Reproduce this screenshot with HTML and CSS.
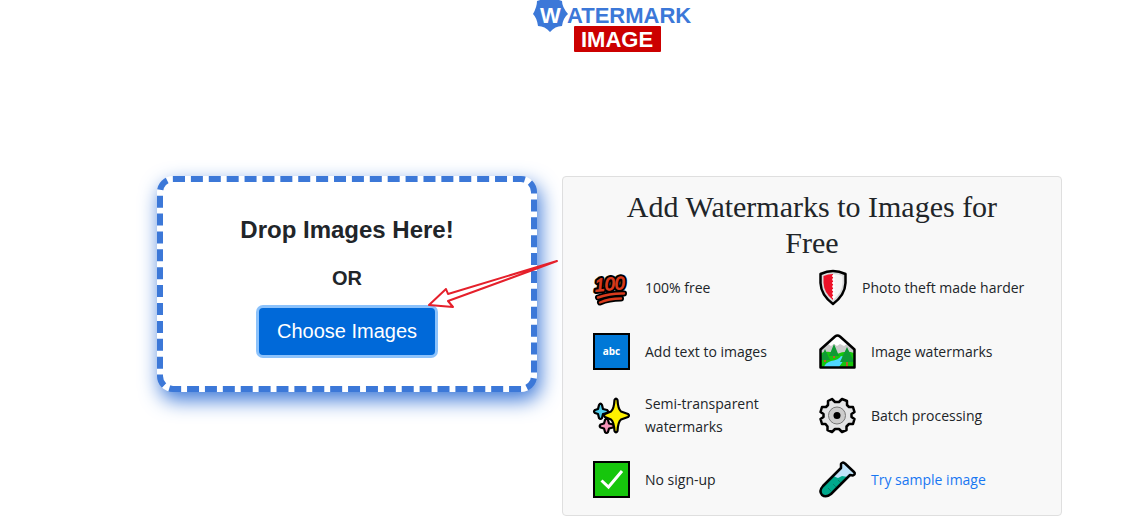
FILE: index.html
```html
<!DOCTYPE html>
<html lang="en">
  <head>
    <meta charset="UTF-8" />
    <meta name="viewport" content="width=device-width, initial-scale=1.0" />
    <title>Watermark Image</title>
    <link rel="stylesheet" href="styles.css">
  </head>
  <body>
    <header class="header">
      <svg class="logo" viewBox="0 0 164 52" role="img" aria-label="Watermark Image">
        <path d="M22 -3L34 1Q34 7 40 14Q35 18 34 26Q27 26 22 32Q17 26 10 26Q9 18 5 14Q9 7 9 1Z" fill="#3c78d8" />
        <text x="12" y="23" fill="#fff">W</text>
        <text x="39" y="23" fill="#3c78d8">ATERMARK</text>
        <rect x="46" y="26" width="87" height="26" rx="1" fill="#c00" />
        <text x="53" y="47" fill="#fff">IMAGE</text>
      </svg>
    </header>

    <main class="container">
      <section class="drop-zone">
        <h2>Drop Images Here!</h2>
        <h3>OR</h3>
        <button type="button" class="choose">Choose Images</button>
        <svg class="arrow" viewBox="0 0 134 52" aria-hidden="true">
          <path d="M131 3L22 36L20 31L3 47L27 49L22 43Q80 22 131 3Z" />
        </svg>
      </section>

      <section class="info">
        <h1>Add Watermarks to Images for Free</h1>
        <ul class="features">
          <li>
            <svg class="icon" viewBox="0 0 37 37">
              <g transform="rotate(-5 18 18)">
                <text class="hundred hundred-edge" x="2" y="21">100</text>
                <text class="hundred" x="2" y="21">100</text>
              </g>
              <path d="M5 28.500Q18 24 31 24.500M7 33.500Q16 29.500 28 29.500" fill="none" stroke="#000" stroke-width="6" stroke-linecap="round" />
              <path d="M5 28.500Q18 24 31 24.500M7 33.500Q16 29.500 28 29.500" fill="none" stroke="#da3b1d" stroke-width="2.400" stroke-linecap="round" />
            </svg>
            <span>100% free</span>
          </li>
          <li>
            <svg class="icon icon-narrow" viewBox="0 0 28 37">
              <path d="M14 2Q20 2 26.500 5V14Q26 26 14 35Q2 26 1.500 14V5Q8 2 14 2Z" fill="#d8d9da" stroke="#000" stroke-width="2.500" stroke-linejoin="round" />
              <path d="M14 5Q9 5 4.500 7V14Q5 24 14 31Z" fill="#ed1128" />
              <path d="M14 5Q19 5 23.500 7V14Q23 24 14 31Z" fill="#f5f5f5" />
              <path d="M14.500 6V30" stroke="#fff" stroke-width="2.500" stroke-dasharray="2 1.500" />
            </svg>
            <span>Photo theft made harder</span>
          </li>
          <li>
            <svg class="icon" viewBox="0 0 37 37">
              <rect x="1" y="1" width="35" height="35" fill="#0078d7" stroke="#000" stroke-width="2" />
              <text class="abc" x="18.500" y="22">abc</text>
            </svg>
            <span>Add text to images</span>
          </li>
          <li>
            <svg class="icon" viewBox="0 0 37 37">
              <path d="M1.500 16.500L16 3.500Q18.500 1.500 21 3.500L35.500 16.500V34.500H1.500Z" fill="#ccc" />
              <path d="M9 11L18 3L28 11L25 13L21 11L18 13L15 11L12 13Z" fill="#fff" />
              <path d="M2 20Q10 17 18 21Q27 17 35 20V34H2Z" fill="#16c60c" />
              <path d="M5 34Q6 30 12 28Q20 27 22 23L26 24Q24 29 20 34Z" fill="#50d8ff" />
              <path d="M15 11L10 23H20ZM6 16L1 27H11ZM28 14L21 29H35Z" fill="#0f9b34" />
              <path d="M15 23V25M6 27V29M28 29V34" stroke="#b2602d" stroke-width="2" />
              <path d="M1.500 16.500L16 3.500Q18.500 1.500 21 3.500L35.500 16.500V34.500H1.500Z" fill="none" stroke="#000" stroke-width="2.500" stroke-linejoin="round" />
            </svg>
            <span>Image watermarks</span>
          </li>
          <li>
            <svg class="icon" viewBox="0 0 37 37">
              <g stroke="#000" stroke-width="2.200" stroke-linejoin="round">
                <path d="M6 8Q7.500 5 9 8L10 12L14 13Q16 14.500 14 16L10 17L9 21Q7.500 23 6 21L5 17L2 16Q0 14.500 2 13L5 12Z" fill="#50d0f0" />
                <path d="M12 23Q13.500 20 15 23L16 26.500L20 27.500Q21.500 29 20 30.500L16 31.500L15 35Q13.500 37 12 35L11 31.500L7.500 30.500Q6 29 7.500 27.500L11 26.500Z" fill="#f494b8" />
                <path d="M21.500 3Q23 0 24.500 3Q25 12 28 14.500L35 17Q37 18.500 35 20L28 22.500Q25 25 24.500 34Q23 37 21.500 34Q21 25 18 22.500L12 20Q10 18.500 12 17L18 14.500Q21 12 21.500 3Z" fill="#fff100" />
              </g>
            </svg>
            <span>Semi-transparent watermarks</span>
          </li>
          <li>
            <svg class="icon" viewBox="0 0 37 37">
              <path d="M13 2L16 5H20L23 2L28 4V8L30 10H34L35.500 15L32.500 17V20L35.500 22L34 27H30L27.500 29.500V33L23 35L20 32H16L13 35L8.500 33V29.500L6.500 27H3L1.500 22L4.500 20V17L1.500 15L3 10H7L9 8V4Z" fill="#e3e4e5" stroke="#000" stroke-width="2.500" stroke-linejoin="round" />
              <circle cx="18" cy="18.500" r="8.500" fill="#ccc" stroke="#777" />
              <circle cx="18" cy="18.500" r="3.500" />
            </svg>
            <span>Batch processing</span>
          </li>
          <li>
            <svg class="icon" viewBox="0 0 37 37">
              <rect x="1" y="1" width="35" height="35" fill="#16c60c" stroke="#000" stroke-width="2" />
              <path d="M8.500 19.500L15.500 26L29 10" fill="none" stroke="#fff" stroke-width="3" />
            </svg>
            <span>No sign-up</span>
          </li>
          <li>
            <svg class="icon" viewBox="0 0 37 37">
              <path d="M22 7L4 25Q-.5 30 3 34Q7 37 12 33L31 14L34 14.500Q37 13 35 11L26 2.500Q23 .5 22 3Z" fill="#bfe3fa" />
              <path d="M14 15L19 17L23 15L29 16L12 33Q7 37 3 34Q-.5 30 4 25Z" fill="#00a88c" />
              <path d="M19 19L22 22M14 23L17 26M9 27L12 30" stroke="#087f6b" />
              <path d="M22 7V3Q23 .5 26 2.500L35 11Q37 13 34 14.500L31 14L12 33Q7 37 3 34Q-.5 30 4 25Z" fill="none" stroke="#000" stroke-width="2.500" stroke-linejoin="round" />
            </svg>
            <a href="#sample">Try sample image</a>
          </li>
        </ul>
      </section>
    </main>
  </body>
</html>
```
FILE: styles.css
```css
* {
  margin: 0;
  padding: 0;
  box-sizing: border-box;
}
body {
  padding-left: 86px;
  font-family: "Open Sans", sans-serif;
  font-size: 14px;
  line-height: 23px;
  color: #212529;
  background-color: #fff;
}
.header {
  display: flex;
  justify-content: center;
  margin-bottom: 124px;
}
.logo {
  width: 164px;
  height: 52px;
  font-family: "Liberation Sans", Arial, sans-serif;
  font-size: 22px;
  font-weight: 700;
}
.container {
  display: grid;
  grid-template-columns: 19fr 25fr;
  align-items: start;
  gap: 25px;
  max-width: 905px;
  margin: 0 auto;
}
.drop-zone {
  position: relative;
  display: flex;
  flex-direction: column;
  align-items: center;
  padding: 33px 20px 31px;
  font-family: "Liberation Sans", Arial, sans-serif;
  background-color: #fff;
  border: 6px dashed #3c78d8;
  border-radius: 16px;
  box-shadow: 3px 8px 20px #3c78d8;
}
.drop-zone h2 {
  margin-bottom: 22px;
  font-size: 24px;
  line-height: 29px;
}
.drop-zone h3 {
  margin-bottom: 18px;
  font-size: 20px;
  line-height: 24px;
}
.choose {
  padding: 8px 18px;
  font-family: inherit;
  font-size: 20px;
  line-height: 31px;
  color: #fff;
  background-color: #0069d9;
  border: none;
  border-radius: 4px;
  box-shadow: 0 0 0 3px #8cc2fb;
  cursor: pointer;
}
/* pointer to the button, runs out over the zone's right edge */
.arrow {
  position: absolute;
  top: 76px;
  right: -29px;
  width: 134px;
  height: 52px;
  fill: #fff;
  stroke: #e5202b;
  stroke-width: 2;
  stroke-linejoin: round;
  pointer-events: none;
}
.info {
  padding: 12px 30px 13px;
  background-color: #f8f8f8;
  border: 1px solid #dfdfdf;
  border-radius: 4px;
}
.info h1 {
  padding: 0 20px;
  margin-bottom: 3px;
  font-family: "Liberation Serif", "Times New Roman", serif;
  font-size: 30px;
  font-weight: 400;
  line-height: 36px;
  text-align: center;
}
.features {
  display: grid;
  grid-template-columns: 1fr 1fr;
  gap: 18px 14px;
  list-style: none;
}
.features li {
  display: flex;
  align-items: center;
  gap: 15px;
  min-height: 46px;
}
.icon {
  flex: none;
  width: 37px;
  height: 37px;
  overflow: visible;
}
.icon-narrow {
  width: 28px;
}
.hundred {
  font-family: "Liberation Sans Narrow", "Liberation Sans", Arial, sans-serif;
  font-size: 18px;
  font-style: italic;
  fill: #da3b1d;
  stroke: #da3b1d;
  stroke-width: 1px;
}
.hundred-edge {
  stroke: #000;
  stroke-width: 5px;
  stroke-linejoin: round;
}
.abc {
  font-size: 10px;
  font-weight: 700;
  fill: #fff;
  text-anchor: middle;
}
a {
  color: #1877f2;
  text-decoration: none;
}
```
